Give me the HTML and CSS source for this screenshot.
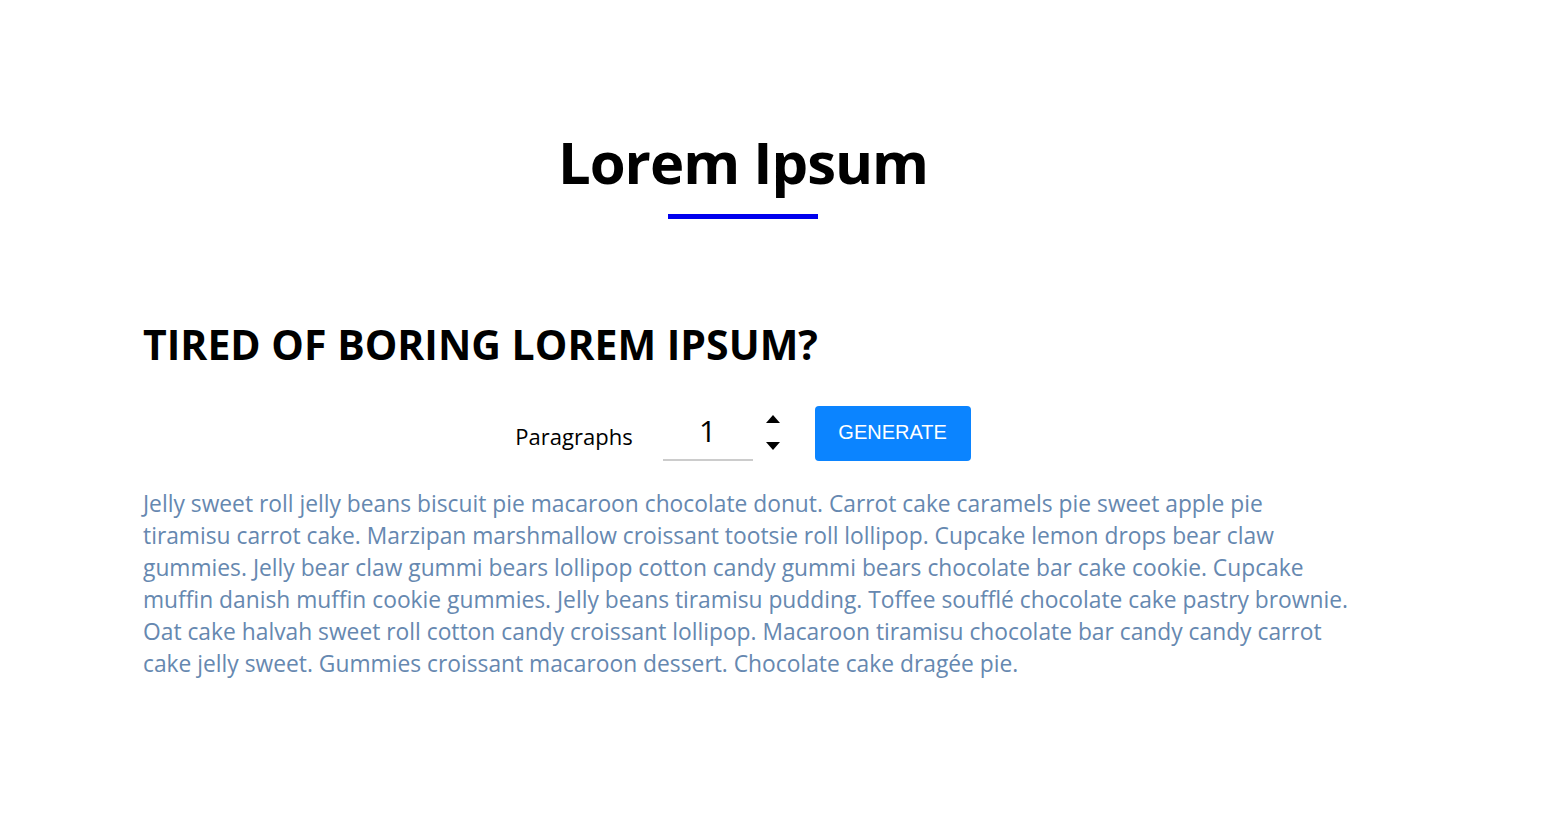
FILE: index.html
```html
<!DOCTYPE html>
<html lang="en">
<head>
<meta charset="utf-8">
<title>Lorem Ipsum</title>
<link rel="stylesheet" href="styles.css">
</head>
<body>
<section class="section-center">
  <div class="title">
    <h1>Lorem Ipsum</h1>
    <div class="underline"></div>
  </div>
  <h2 class="subtitle">TIRED OF BORING LOREM IPSUM?</h2>
  <form class="lorem-form">
    <label class="label" for="amount">Paragraphs</label>
    <div class="number-field">
      <input class="number-input" type="text" id="amount" value="1">
      <svg class="spinner" width="16" height="40" viewBox="0 0 16 40" aria-hidden="true">
        <polygon points="1,9 15,9 8,1" fill="#000"/>
        <polygon points="1,28 15,28 8,36" fill="#000"/>
      </svg>
    </div>
    <button class="btn" type="button">GENERATE</button>
  </form>
  <article class="lorem-text">
    <p>Jelly sweet roll jelly beans biscuit pie macaroon chocolate donut. Carrot cake caramels pie sweet apple pie tiramisu carrot cake. Marzipan marshmallow croissant tootsie roll lollipop. Cupcake lemon drops bear claw gummies. Jelly bear claw gummi bears lollipop cotton candy gummi bears chocolate bar cake cookie. Cupcake muffin danish muffin cookie gummies. Jelly beans tiramisu pudding. Toffee soufflé chocolate cake pastry brownie. Oat cake halvah sweet roll cotton candy croissant lollipop. Macaroon tiramisu chocolate bar candy candy carrot cake jelly sweet. Gummies croissant macaroon dessert. Chocolate cake dragée pie.</p>
  </article>
</section>
</body>
</html>
```

FILE: styles.css
```css
* {
  box-sizing: border-box;
  margin: 0;
  padding: 0;
}

body {
  background: #fff;
  color: #000;
  font-family: "Open Sans", "Noto Sans", sans-serif;
}

.section-center {
  width: 1200px;
  margin-left: 143px;
  padding-top: 122px;
}

.title {
  display: flex;
  flex-direction: column;
  align-items: center;
}

.title h1 {
  font-size: 58px;
  font-weight: 700;
  line-height: 80px;
  letter-spacing: -1px;
}

.underline {
  width: 150px;
  height: 5px;
  background: #0000ee;
  margin-top: 12px;
}

.subtitle {
  margin-top: 97px;
  font-size: 41px;
  font-weight: 700;
  line-height: 56px;
  letter-spacing: 0;
}

.lorem-form {
  display: flex;
  justify-content: center;
  align-items: center;
  margin-top: 33px;
  height: 56px;
}

.label {
  font-size: 22px;
  margin-top: 6px;
  margin-right: 30px;
}

.number-field {
  display: flex;
  align-items: center;
}

.number-input {
  width: 90px;
  height: 52px;
  border: none;
  border-bottom: 2px solid #cccccc;
  font-family: inherit;
  font-size: 30px;
  text-align: center;
  color: #000;
  background: transparent;
  outline: none;
  padding-bottom: 8px;
  margin-top: 4px;
}

.spinner {
  margin-left: 12px;
  margin-top: 2px;
}

.btn {
  margin-left: 34px;
  width: 156px;
  height: 55px;
  border: none;
  border-radius: 4px;
  background: #0b84ff;
  color: #fff;
  font-family: "Liberation Sans", Arial, sans-serif;
  font-size: 20px;
  cursor: pointer;
  padding-bottom: 2px;
}

.lorem-text {
  margin-top: 27px;
  width: 1205px;
}

.lorem-text p {
  color: #6688b0;
  font-size: 22.8px;
  line-height: 32px;
}
```
